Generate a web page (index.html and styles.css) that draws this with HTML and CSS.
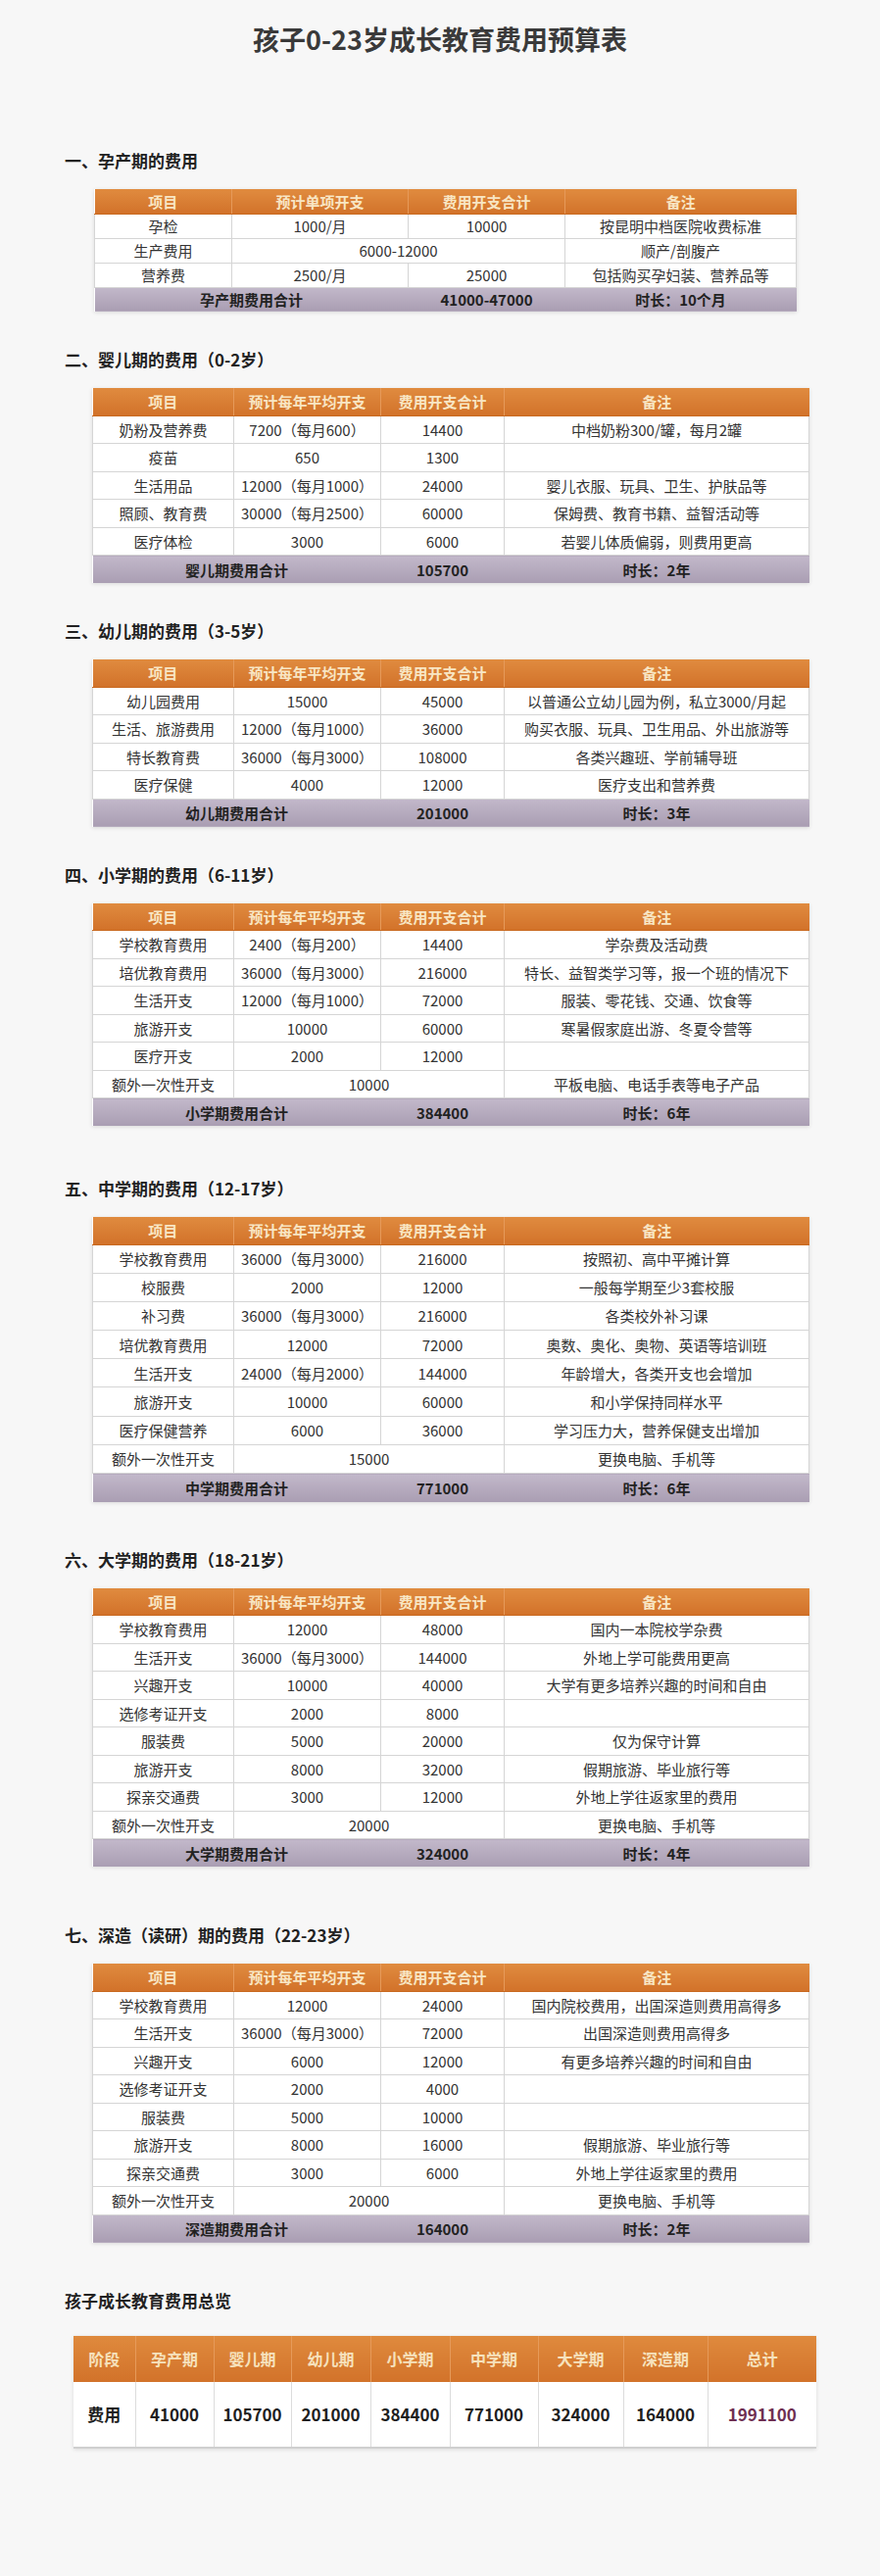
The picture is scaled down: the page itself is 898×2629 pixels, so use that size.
FILE: index.html
```html
<!DOCTYPE html>
<html lang="zh-CN">
<head>
<meta charset="utf-8">
<title>孩子0-23岁成长教育费用预算表</title>
<link rel="stylesheet" href="styles.css">
</head>
<body>
<main class="page">
  <h1 class="page-title">孩子0-23岁成长教育费用预算表</h1>

  <section class="sec sec-first">
    <h2 class="sec-title">一、孕产期的费用</h2>
    <table class="budget budget-compact">
      <colgroup><col class="c1a"><col class="c2a"><col class="c3a"><col class="c4a"></colgroup>
      <thead><tr><th>项目</th><th>预计单项开支</th><th>费用开支合计</th><th>备注</th></tr></thead>
      <tbody>
        <tr><td>孕检</td><td>1000/月</td><td>10000</td><td>按昆明中档医院收费标准</td></tr>
        <tr><td>生产费用</td><td colspan="2">6000-12000</td><td>顺产/剖腹产</td></tr>
        <tr><td>营养费</td><td>2500/月</td><td>25000</td><td>包括购买孕妇装、营养品等</td></tr>
        <tr class="sum"><td colspan="2">孕产期费用合计</td><td>41000-47000</td><td>时长：10个月</td></tr>
      </tbody>
    </table>
  </section>

  <section class="sec">
    <h2 class="sec-title">二、婴儿期的费用（0-2岁）</h2>
    <table class="budget">
      <colgroup><col class="c1"><col class="c2"><col class="c3"><col class="c4"></colgroup>
      <thead><tr><th>项目</th><th>预计每年平均开支</th><th>费用开支合计</th><th>备注</th></tr></thead>
      <tbody>
        <tr><td>奶粉及营养费</td><td>7200（每月600）</td><td>14400</td><td>中档奶粉300/罐，每月2罐</td></tr>
        <tr><td>疫苗</td><td>650</td><td>1300</td><td></td></tr>
        <tr><td>生活用品</td><td>12000（每月1000）</td><td>24000</td><td>婴儿衣服、玩具、卫生、护肤品等</td></tr>
        <tr><td>照顾、教育费</td><td>30000（每月2500）</td><td>60000</td><td>保姆费、教育书籍、益智活动等</td></tr>
        <tr><td>医疗体检</td><td>3000</td><td>6000</td><td>若婴儿体质偏弱，则费用更高</td></tr>
        <tr class="sum"><td colspan="2">婴儿期费用合计</td><td>105700</td><td>时长：2年</td></tr>
      </tbody>
    </table>
  </section>

  <section class="sec">
    <h2 class="sec-title">三、幼儿期的费用（3-5岁）</h2>
    <table class="budget">
      <colgroup><col class="c1"><col class="c2"><col class="c3"><col class="c4"></colgroup>
      <thead><tr><th>项目</th><th>预计每年平均开支</th><th>费用开支合计</th><th>备注</th></tr></thead>
      <tbody>
        <tr><td>幼儿园费用</td><td>15000</td><td>45000</td><td>以普通公立幼儿园为例，私立3000/月起</td></tr>
        <tr><td>生活、旅游费用</td><td>12000（每月1000）</td><td>36000</td><td>购买衣服、玩具、卫生用品、外出旅游等</td></tr>
        <tr><td>特长教育费</td><td>36000（每月3000）</td><td>108000</td><td>各类兴趣班、学前辅导班</td></tr>
        <tr><td>医疗保健</td><td>4000</td><td>12000</td><td>医疗支出和营养费</td></tr>
        <tr class="sum"><td colspan="2">幼儿期费用合计</td><td>201000</td><td>时长：3年</td></tr>
      </tbody>
    </table>
  </section>

  <section class="sec">
    <h2 class="sec-title">四、小学期的费用（6-11岁）</h2>
    <table class="budget">
      <colgroup><col class="c1"><col class="c2"><col class="c3"><col class="c4"></colgroup>
      <thead><tr><th>项目</th><th>预计每年平均开支</th><th>费用开支合计</th><th>备注</th></tr></thead>
      <tbody>
        <tr><td>学校教育费用</td><td>2400（每月200）</td><td>14400</td><td>学杂费及活动费</td></tr>
        <tr><td>培优教育费用</td><td>36000（每月3000）</td><td>216000</td><td>特长、益智类学习等，报一个班的情况下</td></tr>
        <tr><td>生活开支</td><td>12000（每月1000）</td><td>72000</td><td>服装、零花钱、交通、饮食等</td></tr>
        <tr><td>旅游开支</td><td>10000</td><td>60000</td><td>寒暑假家庭出游、冬夏令营等</td></tr>
        <tr><td>医疗开支</td><td>2000</td><td>12000</td><td></td></tr>
        <tr><td>额外一次性开支</td><td colspan="2">10000</td><td>平板电脑、电话手表等电子产品</td></tr>
        <tr class="sum"><td colspan="2">小学期费用合计</td><td>384400</td><td>时长：6年</td></tr>
      </tbody>
    </table>
  </section>

  <section class="sec sec-gap-5">
    <h2 class="sec-title">五、中学期的费用（12-17岁）</h2>
    <table class="budget budget-tall">
      <colgroup><col class="c1"><col class="c2"><col class="c3"><col class="c4"></colgroup>
      <thead><tr><th>项目</th><th>预计每年平均开支</th><th>费用开支合计</th><th>备注</th></tr></thead>
      <tbody>
        <tr><td>学校教育费用</td><td>36000（每月3000）</td><td>216000</td><td>按照初、高中平摊计算</td></tr>
        <tr><td>校服费</td><td>2000</td><td>12000</td><td>一般每学期至少3套校服</td></tr>
        <tr><td>补习费</td><td>36000（每月3000）</td><td>216000</td><td>各类校外补习课</td></tr>
        <tr><td>培优教育费用</td><td>12000</td><td>72000</td><td>奥数、奥化、奥物、英语等培训班</td></tr>
        <tr><td>生活开支</td><td>24000（每月2000）</td><td>144000</td><td>年龄增大，各类开支也会增加</td></tr>
        <tr><td>旅游开支</td><td>10000</td><td>60000</td><td>和小学保持同样水平</td></tr>
        <tr><td>医疗保健营养</td><td>6000</td><td>36000</td><td>学习压力大，营养保健支出增加</td></tr>
        <tr><td>额外一次性开支</td><td colspan="2">15000</td><td>更换电脑、手机等</td></tr>
        <tr class="sum"><td colspan="2">中学期费用合计</td><td>771000</td><td>时长：6年</td></tr>
      </tbody>
    </table>
  </section>

  <section class="sec sec-gap-6">
    <h2 class="sec-title">六、大学期的费用（18-21岁）</h2>
    <table class="budget">
      <colgroup><col class="c1"><col class="c2"><col class="c3"><col class="c4"></colgroup>
      <thead><tr><th>项目</th><th>预计每年平均开支</th><th>费用开支合计</th><th>备注</th></tr></thead>
      <tbody>
        <tr><td>学校教育费用</td><td>12000</td><td>48000</td><td>国内一本院校学杂费</td></tr>
        <tr><td>生活开支</td><td>36000（每月3000）</td><td>144000</td><td>外地上学可能费用更高</td></tr>
        <tr><td>兴趣开支</td><td>10000</td><td>40000</td><td>大学有更多培养兴趣的时间和自由</td></tr>
        <tr><td>选修考证开支</td><td>2000</td><td>8000</td><td></td></tr>
        <tr><td>服装费</td><td>5000</td><td>20000</td><td>仅为保守计算</td></tr>
        <tr><td>旅游开支</td><td>8000</td><td>32000</td><td>假期旅游、毕业旅行等</td></tr>
        <tr><td>探亲交通费</td><td>3000</td><td>12000</td><td>外地上学往返家里的费用</td></tr>
        <tr><td>额外一次性开支</td><td colspan="2">20000</td><td>更换电脑、手机等</td></tr>
        <tr class="sum"><td colspan="2">大学期费用合计</td><td>324000</td><td>时长：4年</td></tr>
      </tbody>
    </table>
  </section>

  <section class="sec sec-gap-7">
    <h2 class="sec-title">七、深造（读研）期的费用（22-23岁）</h2>
    <table class="budget">
      <colgroup><col class="c1"><col class="c2"><col class="c3"><col class="c4"></colgroup>
      <thead><tr><th>项目</th><th>预计每年平均开支</th><th>费用开支合计</th><th>备注</th></tr></thead>
      <tbody>
        <tr><td>学校教育费用</td><td>12000</td><td>24000</td><td>国内院校费用，出国深造则费用高得多</td></tr>
        <tr><td>生活开支</td><td>36000（每月3000）</td><td>72000</td><td>出国深造则费用高得多</td></tr>
        <tr><td>兴趣开支</td><td>6000</td><td>12000</td><td>有更多培养兴趣的时间和自由</td></tr>
        <tr><td>选修考证开支</td><td>2000</td><td>4000</td><td></td></tr>
        <tr><td>服装费</td><td>5000</td><td>10000</td><td></td></tr>
        <tr><td>旅游开支</td><td>8000</td><td>16000</td><td>假期旅游、毕业旅行等</td></tr>
        <tr><td>探亲交通费</td><td>3000</td><td>6000</td><td>外地上学往返家里的费用</td></tr>
        <tr><td>额外一次性开支</td><td colspan="2">20000</td><td>更换电脑、手机等</td></tr>
        <tr class="sum"><td colspan="2">深造期费用合计</td><td>164000</td><td>时长：2年</td></tr>
      </tbody>
    </table>
  </section>

  <section class="sec sec-gap-ov">
    <h2 class="sec-title sec-title-ov">孩子成长教育费用总览</h2>
    <table class="overview">
      <colgroup>
        <col class="o1"><col class="o2"><col class="o3"><col class="o4"><col class="o5">
        <col class="o6"><col class="o7"><col class="o8"><col class="o9">
      </colgroup>
      <thead>
        <tr><th>阶段</th><th>孕产期</th><th>婴儿期</th><th>幼儿期</th><th>小学期</th><th>中学期</th><th>大学期</th><th>深造期</th><th>总计</th></tr>
      </thead>
      <tbody>
        <tr><td>费用</td><td>41000</td><td>105700</td><td>201000</td><td>384400</td><td>771000</td><td>324000</td><td>164000</td><td class="grand">1991100</td></tr>
      </tbody>
    </table>
  </section>
</main>
</body>
</html>
```

FILE: styles.css
```css
html {
  background: #f7f7f7;
}

body {
  margin: 0;
  background: #f7f7f7;
  color: #333;
  font-family: "Noto Sans CJK SC", "Noto Sans", sans-serif;
}

.page {
  width: 898px;
  min-height: 2629px;
  padding-top: 22px;
  box-sizing: border-box;
}

.page-title {
  margin: 0;
  text-align: center;
  font-size: 27px;
  line-height: 36px;
  font-weight: 700;
  color: #3a3a3a;
}

.sec {
  margin-top: 39px;
}

.sec-first {
  margin-top: 96px;
}

.sec-gap-5 {
  margin-top: 54px;
}

.sec-gap-6 {
  margin-top: 49px;
}

.sec-gap-7 {
  margin-top: 60px;
}

.sec-gap-ov {
  margin-top: 49px;
}

.sec-title {
  margin: 0 0 19px 66px;
  font-size: 17px;
  line-height: 20px;
  font-weight: 700;
  color: #222;
}

.sec-title-ov {
  margin-bottom: 26px;
}

/* budget tables */
.budget {
  margin-left: 94px;
  width: 731px;
  table-layout: fixed;
  border-collapse: collapse;
  background: #fff;
  box-shadow: 0 1px 4px rgba(0, 0, 0, 0.12);
  font-size: 15px;
}

.budget-compact {
  margin-left: 96px;
  width: 716px;
}

.c1 { width: 144px; }
.c2 { width: 150px; }
.c3 { width: 126px; }
.c4 { width: 311px; }

.c1a { width: 140px; }
.c2a { width: 180px; }
.c3a { width: 160px; }
.c4a { width: 236px; }

.budget th,
.budget td {
  padding: 0;
  text-align: center;
  vertical-align: middle;
  line-height: 1;
  white-space: nowrap;
}

.budget thead tr {
  height: 28px;
}

.budget th {
  background: linear-gradient(#e08b3f, #d2722a);
  color: #f8e6c4;
  font-weight: 700;
  border-left: 1px solid #e69a5a;
  border-bottom: 1px solid #c9691f;
}

.budget th:first-child {
  border-left: 0;
}

.budget tbody tr {
  height: 28.5px;
}

.budget td {
  color: #333;
  border: 1px solid #d5d5d5;
}

.budget-compact thead tr,
.budget-compact tbody tr {
  height: 25px;
}

.budget-tall tbody tr {
  height: 29.2px;
}

.budget .sum td {
  background: linear-gradient(#c2b8ca, #a99db2);
  color: #222;
  font-weight: 700;
  border: 0;
}

/* overview */
.overview {
  margin-left: 75px;
  width: 758px;
  table-layout: fixed;
  border-collapse: collapse;
  background: #fff;
  box-shadow: 0 1px 4px rgba(0, 0, 0, 0.12);
}

.o1 { width: 63px; }
.o2 { width: 80px; }
.o3 { width: 79px; }
.o4 { width: 81px; }
.o5 { width: 81px; }
.o6 { width: 90px; }
.o7 { width: 87px; }
.o8 { width: 86px; }
.o9 { width: 111px; }

.overview th,
.overview td {
  padding: 0;
  text-align: center;
  vertical-align: middle;
  line-height: 1;
  white-space: nowrap;
  font-weight: 700;
}

.overview thead tr {
  height: 47px;
}

.overview th {
  background: linear-gradient(#df8a3d, #d2722a);
  color: #f6e2bd;
  font-size: 16px;
  border-left: 1px solid #e69a5a;
}

.overview th:first-child {
  border-left: 0;
}

.overview tbody tr {
  height: 67px;
}

.overview td {
  font-size: 17px;
  color: #1e1e1e;
  border-left: 1px solid #dcdcdc;
  border-bottom: 2px solid #cfcfcf;
}

.overview td:first-child {
  border-left: 0;
}

.overview .grand {
  color: #6e2f52;
}
```
